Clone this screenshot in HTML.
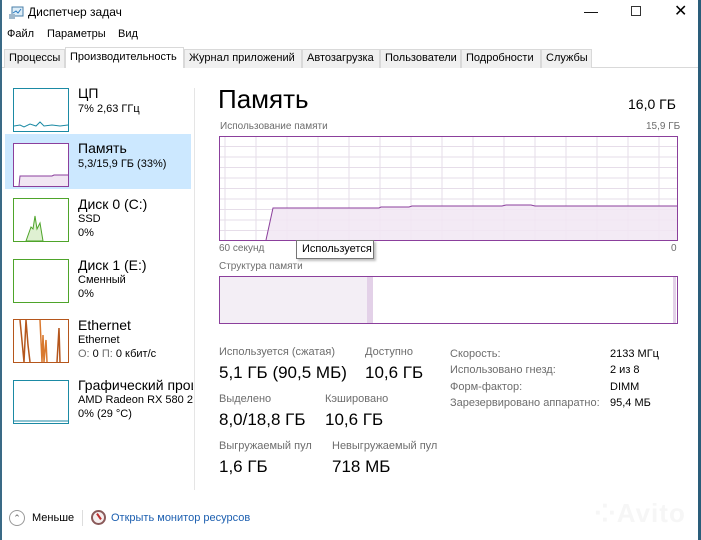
<!DOCTYPE html>
<html><head><meta charset="utf-8"><style>
*{margin:0;padding:0;box-sizing:border-box}
body{width:701px;height:540px;overflow:hidden;background:#fff;font-family:"Segoe UI","Liberation Sans","DejaVu Sans",sans-serif;color:#000;position:relative}
.a{position:absolute;white-space:nowrap}
.s{font-size:11px}
.g{color:#6d6d6d}
.tab{position:absolute;top:49px;height:19px;font-size:11px;line-height:17px;padding:0 4px;background:#f0f0f0;border:1px solid #d9d9d9;border-bottom:none}
.th{position:absolute;left:13px;width:56px;height:44px;background:#fff}
.t1{font-size:14px}
.t2{font-size:11px}
</style></head><body>
<div class="a" style="left:0;top:0;width:2px;height:540px;background:#3a6a86"></div>
<div class="a" style="right:0;top:0;width:3px;height:540px;background:#2a5d7a"></div>
<svg class="a" style="left:8px;top:6px" width="16" height="14"><rect x="4" y="1" width="11" height="9" fill="#dfeef8" stroke="#4a7fa8"/><polyline points="5,7 8,5 10,7 13,3" fill="none" stroke="#2b7bc0"/><rect x="1" y="8" width="6" height="5" fill="#9fb8cc"/></svg>
<div class="a" style="left:28px;top:5px;font-size:12px">Диспетчер задач</div>
<div class="a" style="left:584px;top:3px;font-size:14px">&#8212;</div>
<div class="a" style="left:631px;top:6px;width:10px;height:10px;border:1px solid #333"></div>
<div class="a" style="left:674px;top:1px;font-size:16px;font-weight:300">✕</div>
<div class="a s" style="left:7px;top:28px">Файл</div>
<div class="a s" style="left:47px;top:28px">Параметры</div>
<div class="a s" style="left:118px;top:28px">Вид</div>
<div class="a" style="left:2px;top:67px;width:696px;height:1px;background:#d9d9d9"></div>
<div class="tab" style="left:4px;width:61px">Процессы</div>
<div class="tab" style="left:65px;top:47px;height:21px;width:119px;background:#fff;line-height:19px">Производительность</div>
<div class="tab" style="left:184px;width:118px">Журнал приложений</div>
<div class="tab" style="left:302px;width:78px">Автозагрузка</div>
<div class="tab" style="left:380px;width:81px">Пользователи</div>
<div class="tab" style="left:461px;width:80px">Подробности</div>
<div class="tab" style="left:541px;width:51px">Службы</div>
<div class="a" style="left:194px;top:88px;width:1px;height:402px;background:#e5e5e5"></div>
<div class="a" style="left:5px;top:134px;width:186px;height:55px;background:#cce8ff"></div>
<div class="th" style="top:88px;border:1px solid #1b8aa4"><svg width="54" height="42"><polyline points="0,37 6,36 10,38 16,35 22,37 26,33 30,37 38,36 46,37 54,36" fill="none" stroke="#1b8aa4"/></svg></div>
<div class="a t1" style="left:78px;top:85px">ЦП</div><div class="a t2" style="left:78px;top:103px">7% 2,63 ГГц</div>
<div class="th" style="top:143px;border:1px solid #8b3f9c"><svg width="54" height="42"><polygon points="5,42 6,32 38,32 40,31 54,31 54,42" fill="#f1e6f3"/><polyline points="5,42 6,32 38,32 40,31 54,31" fill="none" stroke="#8b3f9c"/></svg></div>
<div class="a t1" style="left:78px;top:140px">Память</div><div class="a t2" style="left:78px;top:158px">5,3/15,9 ГБ (33%)</div>
<div class="th" style="top:198px;border:1px solid #4ea42a"><svg width="54" height="42"><polygon points="12,42 17,28 19,30 21,17 23,30 26,24 29,42" fill="#dff0d2" stroke="#4ea42a"/></svg></div>
<div class="a t1" style="left:78px;top:196px">Диск 0 (C:)</div><div class="a t2" style="left:78px;top:213px">SSD</div><div class="a t2" style="left:78px;top:227px">0%</div>
<div class="th" style="top:259px;border:1px solid #4ea42a"></div>
<div class="a t1" style="left:78px;top:257px">Диск 1 (E:)</div><div class="a t2" style="left:78px;top:274px">Сменный</div><div class="a t2" style="left:78px;top:288px">0%</div>
<div class="th" style="top:319px;border:1px solid #b5561c"><svg width="54" height="42"><polyline points="6,0 10,42 12,0 14,25 16,42" fill="none" stroke="#b5561c" stroke-width="1.5"/><polyline points="26,0 28,42 29,15 30,42 32,20 33,42" fill="none" stroke="#d9792f" stroke-width="1.5"/><polyline points="43,42 45,8 46,42" fill="none" stroke="#b5561c" stroke-width="1.5"/></svg></div>
<div class="a t1" style="left:78px;top:317px">Ethernet</div><div class="a t2" style="left:78px;top:334px">Ethernet</div><div class="a t2" style="left:78px;top:348px"><span class="g">О:</span> 0 <span class="g">П:</span> 0 кбит/с</div>
<div class="th" style="top:380px;border:1px solid #1b8aa4"><svg width="54" height="42"><polyline points="0,40 54,40" stroke="#1b8aa4"/></svg></div>
<div class="a t1" style="left:78px;top:377px;width:115px;overflow:hidden">Графический процессор</div><div class="a t2" style="left:78px;top:394px;width:115px;overflow:hidden">AMD Radeon RX 580 2048SP</div><div class="a t2" style="left:78px;top:408px">0% (29 °C)</div>
<div class="a" style="left:218px;top:84px;font-size:26px;font-weight:300">Память</div>
<div class="a" style="left:628px;top:96px;font-size:14px">16,0 ГБ</div>
<div class="a s g" style="left:220px;top:121px;font-size:10px">Использование памяти</div>
<div class="a s g" style="left:646px;top:121px;font-size:10px">15,9 ГБ</div>
<svg class="a" style="left:219px;top:136px" width="459" height="105">
<g stroke="#e6dde9" stroke-width="1">
<line x1="0" y1="10.5" x2="459" y2="10.5"/><line x1="0" y1="21" x2="459" y2="21"/><line x1="0" y1="31.5" x2="459" y2="31.5"/><line x1="0" y1="42" x2="459" y2="42"/><line x1="0" y1="52.5" x2="459" y2="52.5"/><line x1="0" y1="63" x2="459" y2="63"/><line x1="0" y1="73.5" x2="459" y2="73.5"/><line x1="0" y1="84" x2="459" y2="84"/><line x1="0" y1="94.5" x2="459" y2="94.5"/>
<line x1="6" y1="0" x2="6" y2="105"/><line x1="37" y1="0" x2="37" y2="105"/><line x1="68" y1="0" x2="68" y2="105"/><line x1="99" y1="0" x2="99" y2="105"/><line x1="130" y1="0" x2="130" y2="105"/><line x1="161" y1="0" x2="161" y2="105"/><line x1="192" y1="0" x2="192" y2="105"/><line x1="223" y1="0" x2="223" y2="105"/><line x1="254" y1="0" x2="254" y2="105"/><line x1="285" y1="0" x2="285" y2="105"/><line x1="316" y1="0" x2="316" y2="105"/><line x1="347" y1="0" x2="347" y2="105"/><line x1="378" y1="0" x2="378" y2="105"/><line x1="409" y1="0" x2="409" y2="105"/><line x1="440" y1="0" x2="440" y2="105"/>
</g>
<polygon points="47,104 54,72 160,72 162,71 190,71 193,70 283,70 287,69 312,69 316,70 459,70 459,104" fill="#f1e6f3" fill-opacity="0.85"/>
<polyline points="47,104 54,72 160,72 162,71 190,71 193,70 283,70 287,69 312,69 316,70 458,70" fill="none" stroke="#8b3f9c"/>
<rect x="0.5" y="0.5" width="458" height="104" fill="none" stroke="#8b3f9c"/>
</svg>
<div class="a g" style="left:219px;top:243px;font-size:10px">60 секунд</div>
<div class="a g" style="left:671px;top:243px;font-size:10px">0</div>
<div class="a" style="left:296px;top:240px;width:78px;height:19px;border:1px solid #767676;background:#fff;font-size:11px;line-height:16px;padding-left:5px;box-shadow:2px 2px 2px rgba(0,0,0,.25)">Используется</div>
<div class="a g" style="left:219px;top:261px;font-size:10px">Структура памяти</div>
<svg class="a" style="left:219px;top:276px" width="459" height="48">
<rect x="0" y="0" width="148" height="48" fill="#f3eef5"/>
<rect x="148" y="0" width="6" height="48" fill="#e3d1e8"/>
<rect x="454" y="0" width="3" height="48" fill="#e3d1e8"/>
<rect x="0.5" y="0.5" width="458" height="47" fill="none" stroke="#8b3f9c"/>
</svg>
<div class="a s g" style="left:219px;top:346px">Используется (сжатая)</div>
<div class="a" style="left:219px;top:363px;font-size:17px">5,1 ГБ (90,5 МБ)</div>
<div class="a s g" style="left:365px;top:346px">Доступно</div>
<div class="a" style="left:365px;top:363px;font-size:17px">10,6 ГБ</div>
<div class="a s g" style="left:219px;top:393px">Выделено</div>
<div class="a" style="left:219px;top:410px;font-size:17px">8,0/18,8 ГБ</div>
<div class="a s g" style="left:325px;top:393px">Кэшировано</div>
<div class="a" style="left:325px;top:410px;font-size:17px">10,6 ГБ</div>
<div class="a s g" style="left:219px;top:440px">Выгружаемый пул</div>
<div class="a" style="left:219px;top:457px;font-size:17px">1,6 ГБ</div>
<div class="a s g" style="left:332px;top:440px">Невыгружаемый пул</div>
<div class="a" style="left:332px;top:457px;font-size:17px">718 МБ</div>
<div class="a s g" style="left:450px;top:346px;line-height:16.3px">Скорость:<br>Использовано гнезд:<br>Форм-фактор:<br>Зарезервировано аппаратно:</div>
<div class="a s" style="left:610px;top:346px;line-height:16.3px">2133 МГц<br>2 из 8<br>DIMM<br>95,4 МБ</div>
<div class="a" style="left:9px;top:510px;width:16px;height:16px;border:1px solid #999;border-radius:50%;font-size:9px;line-height:14px;text-align:center;color:#666">⌃</div>
<div class="a s" style="left:32px;top:512px">Меньше</div>
<div class="a" style="left:82px;top:510px;width:1px;height:16px;background:#ddd"></div>
<div class="a" style="left:91px;top:510px;width:15px;height:15px;border:2px solid #8a5a5a;border-radius:50%;background:#f5eeee"><div style="position:absolute;left:5px;top:1px;width:2px;height:7px;background:#c03030;transform:rotate(-35deg)"></div></div>
<div class="a s" style="left:111px;top:512px;color:#1c5fb0">Открыть монитор ресурсов</div>
<div class="a" style="left:594px;top:498px;font-size:26px;font-weight:bold;color:#f6f6f6;letter-spacing:1px">⁘Avito</div>
</body></html>
